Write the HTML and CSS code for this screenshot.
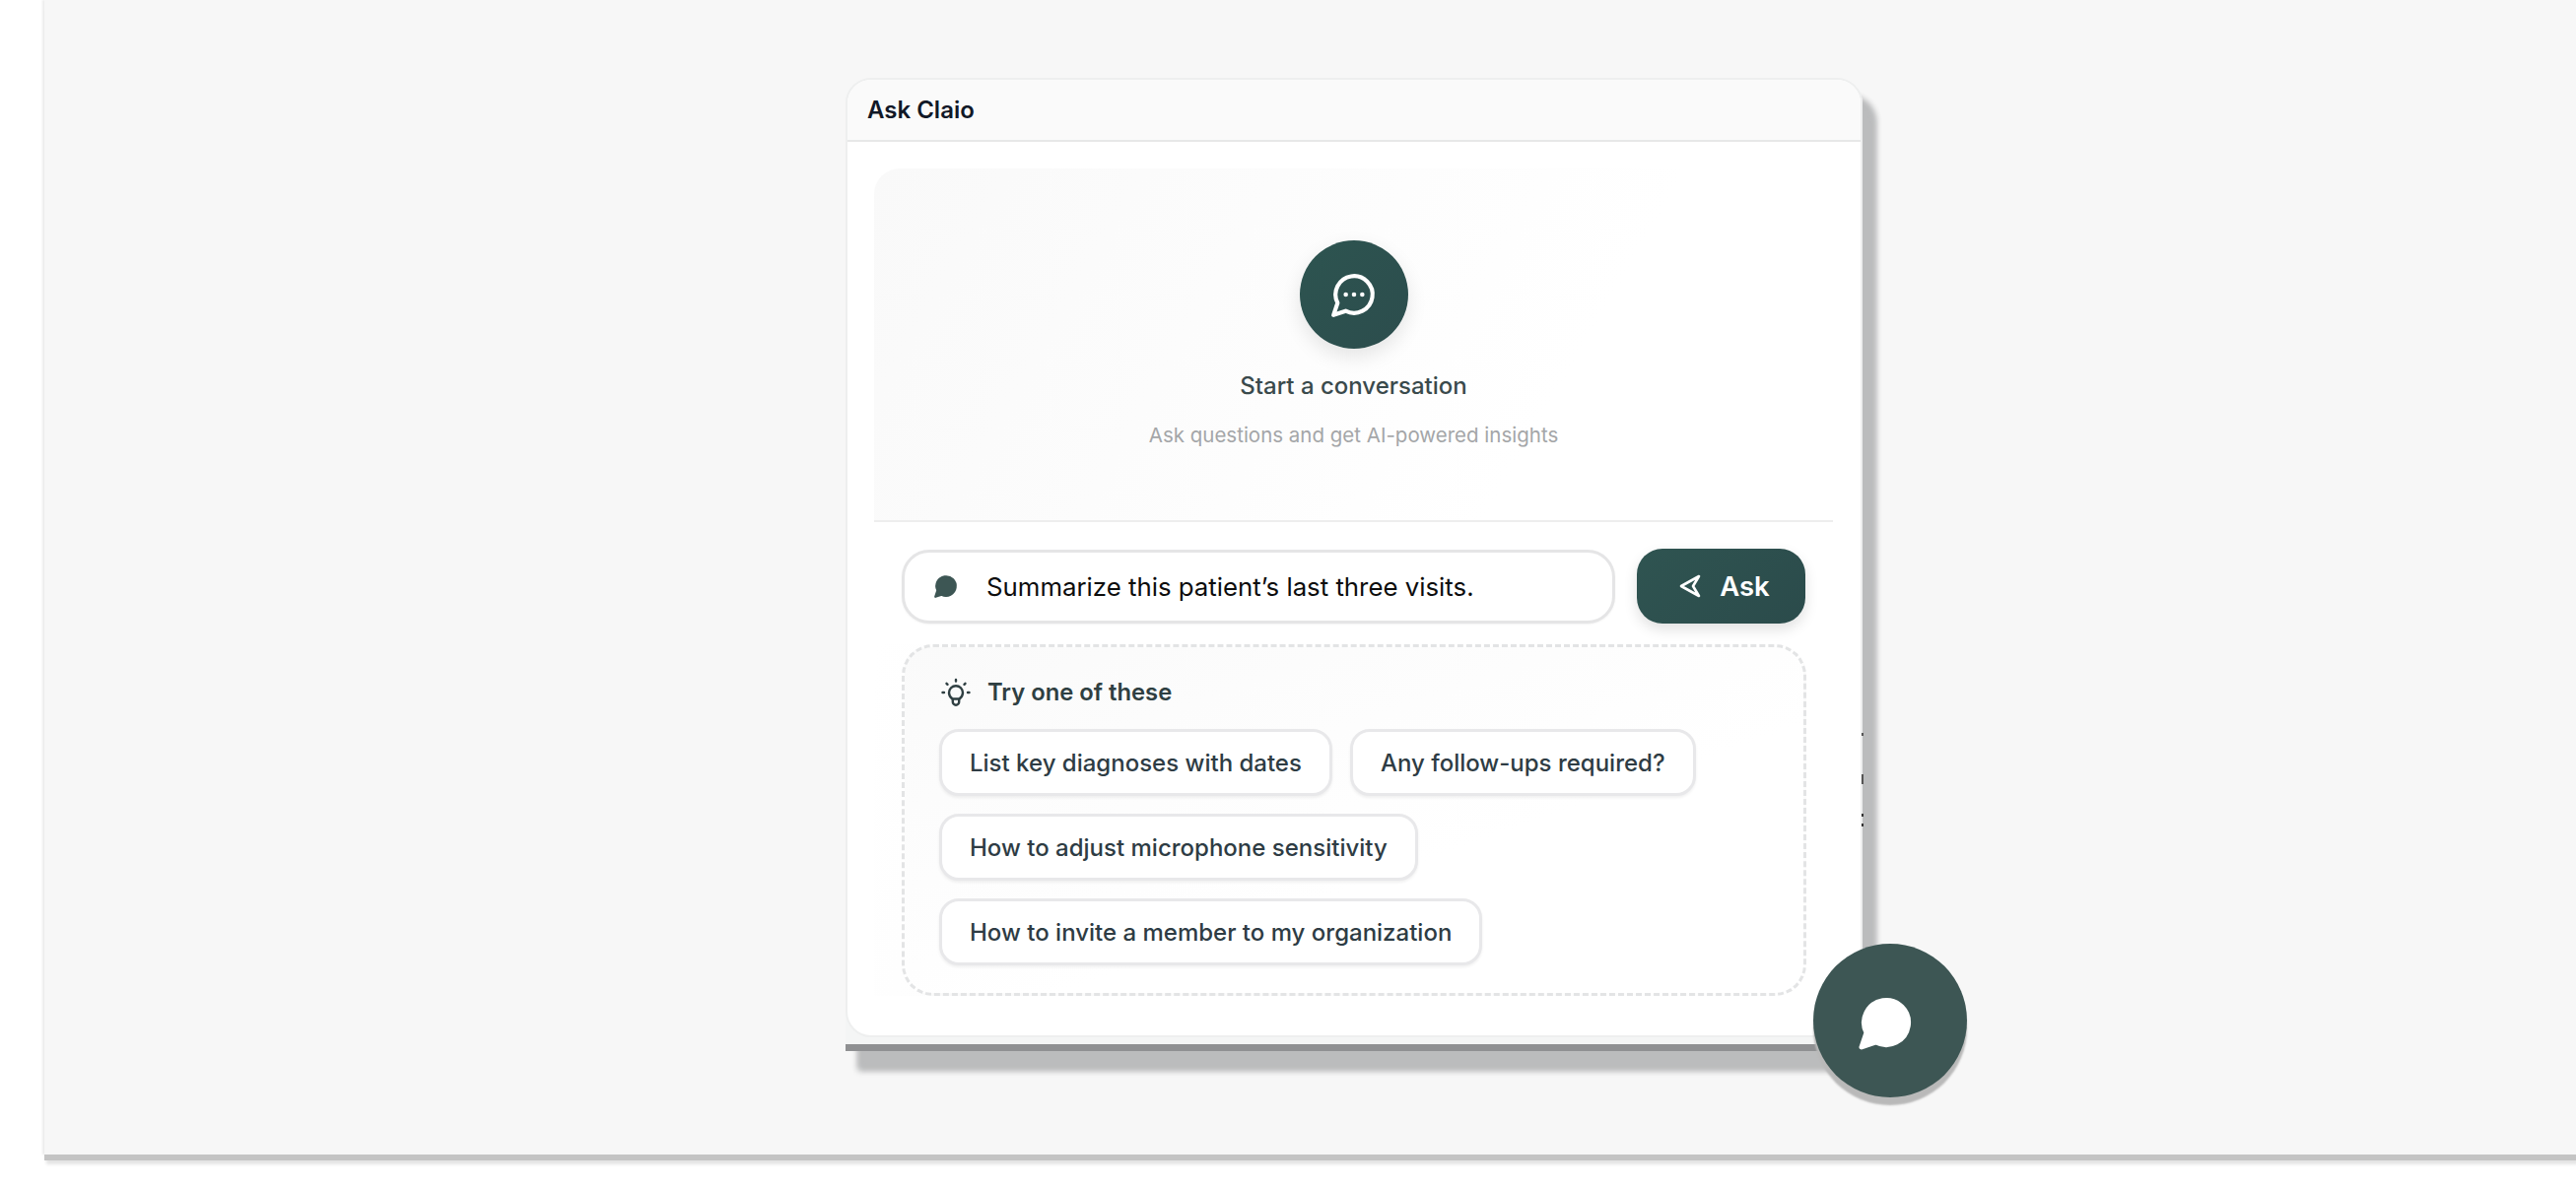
FILE: index.html
```html
<!DOCTYPE html>
<html lang="en">
<head>
    <meta charset="UTF-8">
    <meta name="viewport" content="width=device-width, initial-scale=1.0">
    <title>Ask Claio</title>
    <link rel="stylesheet" href="styles.css">
</head>
<body>
    <div class="stage">
        <div class="frame">
            <section class="card">
                <header class="card-header">Ask Claio</header>

                <div class="card-body">
                    <div class="empty">
                        <div class="empty-icon">
                            <svg width="50" height="50" viewBox="0 0 24 24" fill="none" stroke="#fff" stroke-width="2" stroke-linecap="round" stroke-linejoin="round">
                                <path d="M7.9 20A9 9 0 1 0 4 16.1L2 22Z"/>
                                <circle cx="8" cy="12" r="0.6" fill="#fff" stroke-width="1"/>
                                <circle cx="12" cy="12" r="0.6" fill="#fff" stroke-width="1"/>
                                <circle cx="16" cy="12" r="0.6" fill="#fff" stroke-width="1"/>
                            </svg>
                        </div>
                        <h2 class="empty-title">Start a conversation</h2>
                        <p class="empty-text">Ask questions and get AI-powered insights</p>
                    </div>

                    <div class="composer">
                        <div class="question">
                            <svg class="question-icon" width="28" height="26" viewBox="0 0 24 24" fill="#3d5654" stroke="#3d5654" stroke-width="2" stroke-linejoin="round">
                                <path d="M7.9 20A9 9 0 1 0 4 16.1L2 22Z"/>
                            </svg>
                            <span>Summarize this patient’s last three visits.</span>
                        </div>
                        <button class="ask">
                            <svg width="22" height="24" viewBox="0 0 22 24" fill="none" stroke="#fff" stroke-width="2.6" stroke-linejoin="round">
                                <path d="M2 12L20 2L14 12L20 22Z"/>
                            </svg>
                            Ask
                        </button>
                    </div>

                    <div class="suggest-wrap">
                        <div class="suggest">
                            <div class="suggest-title">
                                <svg width="30" height="30" viewBox="0 0 30 30" fill="none" stroke="#2f3f42" stroke-width="2.4" stroke-linecap="round" stroke-linejoin="round">
                                    <path d="M11.5 21.5C9.5 20 8 17.8 8 15.2a7 7 0 0 1 14 0c0 2.6-1.5 4.800-3.500 6.300Z"/>
                                    <path d="M11.800 22v2.500a3.200 3.200 0 0 0 6.400 0V22"/>
                                    <path d="M15 2v1.500M5.500 5.800l1 1M24.500 5.800l-1 1M1.500 15h1.500M27 15h1.500"/>
                                </svg>
                                Try one of these
                            </div>
                            <div class="chips">
                                <button class="chip">List key diagnoses with dates</button>
                                <button class="chip">Any follow-ups required?</button>
                                <button class="chip">How to adjust microphone sensitivity</button>
                                <button class="chip">How to invite a member to my organization</button>
                            </div>
                        </div>
                    </div>
                </div>
            </section>

            <span class="edge-marks"></span>

            <button class="fab">
                <svg class="fab-icon" width="62" height="60" viewBox="0 0 24 24" fill="#fff" stroke="#fff" stroke-width="2" stroke-linejoin="round">
                    <path d="M7.9 20A9 9 0 1 0 4 16.1L2 22Z"/>
                </svg>
            </button>
        </div>
    </div>
</body>
</html>
```

FILE: styles.css
```css
body {
    margin: 0;
    padding: 0 0 0 45px;
    height: 1206px;
    box-sizing: border-box;
    overflow: hidden;
    background-color: #fff;
    font-family: 'Inter', 'Liberation Sans', sans-serif;
}

.stage {
    height: 1172px;
    padding: 79px 0 0 813px;
    box-sizing: border-box;
    background-color: #f7f7f7;
    box-shadow: 0 6px 0 #c4c4c4, 2px 10px 3px #e4e4e4, -2px 0 2px #ececec;
}

.frame {
    position: relative;
    width: 1032px;
    padding-bottom: 7px;
    background-color: #f4f5f5;
    border-bottom: 7px solid #8f9092;
    border-radius: 26px 26px 0 0;
    box-shadow: 13px 18px 6px #bbbcbd, 13px 20px 6px #bbbcbd;
}

.card {
    box-sizing: border-box;
    height: 974px;
    background-color: #fff;
    border: 2px solid #eeefef;
    border-radius: 26px;
    overflow: hidden;
}

.card-header {
    height: 61px;
    padding-left: 20px;
    display: flex;
    align-items: center;
    background-color: #fafafa;
    border-bottom: 2px solid #e7e8e8;
    font-size: 24px;
    font-weight: 600;
    color: #111827;
}

.card-body {
    padding: 27px 28px 0 27px;
}

.empty {
    height: 359px;
    box-sizing: border-box;
    padding-top: 73px;
    display: flex;
    flex-direction: column;
    align-items: center;
    background: linear-gradient(120deg, #f9f9f9, #fff 70%);
    border-bottom: 2px solid #eeeeee;
    border-radius: 26px 26px 0 0;
}

.empty-icon {
    width: 110px;
    height: 110px;
    display: flex;
    align-items: center;
    justify-content: center;
    border-radius: 50%;
    background: linear-gradient(135deg, #2d5450, #2c4d4d);
    box-shadow: 0 8px 20px rgba(0, 0, 0, 0.1);
}

.empty-title {
    margin: 23px 0 0;
    font-size: 24px;
    line-height: 30px;
    font-weight: 500;
    color: #3a4a4c;
}

.empty-text {
    margin: 20px 0 0;
    font-size: 20.5px;
    line-height: 30px;
    color: #a4a6a8;
}

.composer {
    margin-top: 27px;
    padding: 0 28px 0 28px;
    display: flex;
    align-items: center;
    gap: 22px;
}

.question {
    flex: 1;
    height: 75px;
    box-sizing: border-box;
    padding-left: 28px;
    display: flex;
    align-items: center;
    gap: 27px;
    background-color: #fff;
    border: 3px solid #e5e5e6;
    border-radius: 28px;
    box-shadow: 0 1px 2px rgba(0, 0, 0, 0.05);
    font-size: 25.8px;
    color: #0d0d0d;
}

.ask {
    width: 171px;
    height: 76px;
    display: flex;
    align-items: center;
    justify-content: center;
    gap: 19px;
    padding: 0 0 0 7px;
    border: none;
    border-radius: 26px;
    background: linear-gradient(135deg, #2f5451, #2b4b4b);
    box-shadow: 0 6px 14px rgba(0, 0, 0, 0.12);
    color: #fff;
    font-family: inherit;
    font-size: 27.5px;
    font-weight: 600;
}

.suggest-wrap {
    margin-top: 21px;
    padding-left: 28px;
    background: linear-gradient(100deg, #fff, #fafafa 40%, #fff 90%);
}

.suggest {
    width: 918px;
    height: 357px;
    box-sizing: border-box;
    padding: 31px 35px 0;
    background: linear-gradient(160deg, #fafafa, #fff 60%);
    border: 3px dashed #e3e4e5;
    border-radius: 32px;
}

.suggest-title {
    display: flex;
    align-items: center;
    gap: 17px;
    padding-left: 2px;
    font-size: 23.8px;
    line-height: 30px;
    font-weight: 600;
    color: #2f3f42;
}

.chips {
    margin-top: 22px;
    display: flex;
    flex-wrap: wrap;
    gap: 18px 18px;
    width: 800px;
}

.chip {
    height: 68px;
    padding: 0 28px;
    background-color: #fff;
    border: 3px solid #e8e8ea;
    border-radius: 20px;
    box-shadow: 0 2px 3px rgba(0, 0, 0, 0.06);
    font-family: inherit;
    font-size: 24px;
    font-weight: 450;
    color: #2e3c44;
}

/* small specks left on the card's right edge */
.edge-marks {
    position: absolute;
    left: 1031px;
    top: 665px;
    width: 2px;
    height: 95px;
    background: linear-gradient(#555 0 3px, transparent 3px 42px, #555 42px 52px, transparent 52px 82px, #333 82px 85px, transparent 85px 92px, #333 92px 95px);
}

.fab {
    position: absolute;
    right: -106px;
    bottom: -54px;
    width: 156px;
    height: 156px;
    display: flex;
    align-items: center;
    justify-content: center;
    padding: 0;
    border: none;
    border-radius: 50%;
    background-color: #3d5654;
    box-shadow: 0 8px 2px #b9b9b9;
}

.fab-icon {
    margin: 3px 9px 0 0;
}
```
